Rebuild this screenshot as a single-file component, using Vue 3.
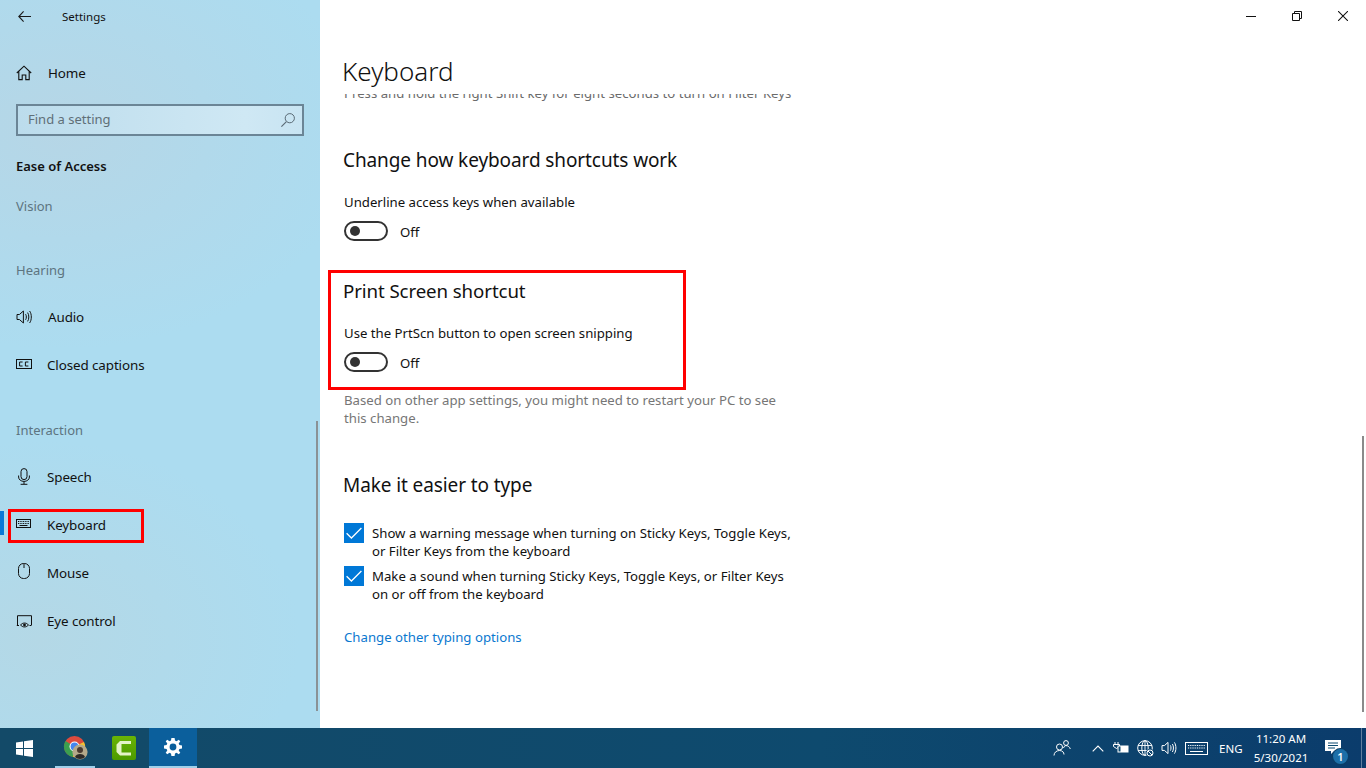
<script setup>
</script>

<template>
  <div class="screen">
    <div class="window">
      <aside class="side">
        <div class="titlebar">
          <svg class="back" width="13" height="11" viewBox="0 0 13 11"><path d="M5.6.4.8 5.5 5.6 10.6M.8 5.5H13" fill="none" stroke="#1a1a1a" stroke-width="1.1"/></svg>
          <span class="title">Settings</span>
        </div>
        <div class="nav-row home">
          <svg class="ico" width="16" height="16" viewBox="0 0 16 16"><path d="M.8 8 8 1.2 15.2 8M2.8 6.4V14.6H6.2V10H9.8V14.6H13.2V6.4" fill="none" stroke="#111" stroke-width="1.1"/></svg>
          <span class="nav-label lbl-home">Home</span>
        </div>
        <div class="search">
          <span class="search-text">Find a setting</span>
          <svg width="16" height="16" viewBox="0 0 16 16"><circle cx="9.8" cy="6.2" r="4.6" fill="none" stroke="#5a6a75" stroke-width="1"/><path d="M6.4 9.6 1.4 14.6" stroke="#5a6a75" stroke-width="1.1"/></svg>
        </div>
        <div class="cat">Ease of Access</div>
        <div class="group vision">Vision</div>
        <div class="group hearing">Hearing</div>
        <div class="nav-row audio">
          <svg class="ico" width="17" height="16" viewBox="0 0 17 16"><path d="M1 5.5H3.4L7.4 2V14L3.4 10.5H1ZM9.6 5.2C10.6 6.6 10.6 9.4 9.6 10.8M11.6 3.6C13.2 5.8 13.2 10.2 11.6 12.4M13.6 2C15.9 5 15.9 11 13.6 14" fill="none" stroke="#111" stroke-width="1"/></svg>
          <span class="nav-label lbl-home">Audio</span>
        </div>
        <div class="nav-row">
          <svg class="ico up1" width="16" height="10" viewBox="0 0 16 10"><rect x=".5" y=".5" width="15" height="9" fill="none" stroke="#111"/><path d="M6.6 3H3.6V7H6.6M12.4 3H9.4V7H12.4" fill="none" stroke="#111"/></svg>
          <span class="nav-label">Closed captions</span>
        </div>
        <div class="group interaction">Interaction</div>
        <div class="nav-row">
          <svg class="ico up1" width="16" height="17" viewBox="0 0 16 17"><rect x="5" y=".6" width="6" height="11" rx="3" fill="none" stroke="#111"/><path d="M2.6 7.5V9C2.6 11.6 5 13.4 8 13.4S13.4 11.6 13.4 9V7.5M8 13.4V16M4.6 16.3H11.4" fill="none" stroke="#111"/></svg>
          <span class="nav-label">Speech</span>
        </div>
        <div class="nav-row active">
          <span class="accent"></span>
          <span class="mark"></span>
          <svg class="ico up3" width="15" height="9" viewBox="0 0 15 9"><rect x=".5" y=".5" width="14" height="8" fill="none" stroke="#111"/><path d="M2 2.5H13M2 4.5H13" stroke="#111" stroke-dasharray="1 .7"/><path d="M3.5 6.5H11.5" stroke="#111"/></svg>
          <span class="nav-label">Keyboard</span>
        </div>
        <div class="nav-row">
          <svg class="ico up3" width="16" height="16" viewBox="0 0 16 16"><rect x="2.5" y=".5" width="11" height="15" rx="5" fill="none" stroke="#111"/><path d="M8 .5V5" stroke="#111"/></svg>
          <span class="nav-label">Mouse</span>
        </div>
        <div class="nav-row">
          <svg class="ico" width="16" height="13" viewBox="0 0 16 13"><path d="M1.5 10V.7H15.5V10" fill="none" stroke="#111"/><path d="M.8 10.5H3M13.5 10.5H15.5" stroke="#111"/><path d="M4.5 10C6.5 7.4 10.5 7.4 12.5 10 10.5 12.6 6.5 12.6 4.5 10Z" fill="none" stroke="#111"/><circle cx="8.5" cy="10" r="1.4" fill="#111"/></svg>
          <span class="nav-label">Eye control</span>
        </div>
        <div class="side-thumb"></div>
      </aside>

      <main class="main">
        <div class="win-controls">
          <svg width="10" height="10" viewBox="0 0 10 10"><path d="M0 5.5H10" stroke="#111"/></svg>
          <svg width="10" height="10" viewBox="0 0 10 10"><path d="M.5 2.5H7.5V9.5H.5ZM2.5 2.5V.5H9.5V7.5H7.5" fill="none" stroke="#111"/></svg>
          <svg width="10" height="10" viewBox="0 0 10 10"><path d="M0 0 10 10M10 0 0 10" stroke="#111" stroke-width="1.05"/></svg>
        </div>
        <h1 class="page-title">Keyboard</h1>
        <div class="scroller">
          <div class="clipped">Press and hold the right Shift key for eight seconds to turn on Filter Keys</div>
          <h2 class="head first">Change how keyboard shortcuts work</h2>
          <div class="setting">Underline access keys when available</div>
          <div class="toggle-row"><span class="toggle"><span class="knob"></span></span><span class="off">Off</span></div>

          <div class="boxed">
            <h2 class="head boxed-head">Print Screen shortcut</h2>
            <div class="setting boxed-setting">Use the PrtScn button to open screen snipping</div>
            <div class="toggle-row boxed-toggle"><span class="toggle"><span class="knob"></span></span><span class="off">Off</span></div>
          </div>
          <p class="note">Based on other app settings, you might need to restart your PC to see this change.</p>

          <h2 class="head type-head">Make it easier to type</h2>
          <div class="check-row">
            <span class="check"><svg width="20" height="20" viewBox="0 0 20 20"><path d="M2.6 10.2 7.4 15 17.4 5" fill="none" stroke="#fff" stroke-width="1.3"/></svg></span>
            <span class="check-text">Show a warning message when turning on Sticky Keys, Toggle Keys, or Filter Keys from the keyboard</span>
          </div>
          <div class="check-row second">
            <span class="check"><svg width="20" height="20" viewBox="0 0 20 20"><path d="M2.6 10.2 7.4 15 17.4 5" fill="none" stroke="#fff" stroke-width="1.3"/></svg></span>
            <span class="check-text">Make a sound when turning Sticky Keys, Toggle Keys, or Filter Keys on or off from the keyboard</span>
          </div>
          <div class="link">Change other typing options</div>
        </div>
        <div class="main-thumb"></div>
      </main>
    </div>

    <footer class="taskbar">
      <div class="start">
        <svg width="17" height="17" viewBox="0 0 17 17"><path d="M0 2.4 7 1.4V8H0ZM8 1.3 17 0V8H8ZM0 9H7V15.6L0 14.6ZM8 9H17V17L8 15.7Z" fill="#fff"/></svg>
      </div>
      <div class="tb-app chrome">
        <svg width="26" height="26" viewBox="0 0 26 26">
          <circle cx="11.5" cy="11.5" r="10.5" fill="#dd4b3e"/>
          <path d="M11.5 11.5 2.5 6A10.5 10.5 0 0 0 10 22Z" fill="#3c9f4f"/>
          <path d="M11.5 11.5 21 7A10.5 10.5 0 0 1 10 22Z" fill="#f2c230"/>
          <circle cx="11.5" cy="11.5" r="5" fill="#fff"/><circle cx="11.5" cy="11.5" r="3.9" fill="#4586ef"/>
          <circle cx="17" cy="17" r="7.6" fill="#b4a98a"/><circle cx="17" cy="15" r="3" fill="#4a3a30"/><path d="M12 22C13 18 21 18 22 22 20 24.5 14 24.5 12 22Z" fill="#2e2a28"/>
        </svg>
      </div>
      <div class="tb-app camtasia">
        <span class="cam-tile"><svg width="24" height="24" viewBox="0 0 24 24"><path d="M19 5H8L4.500 8.500V16L8 19.500H19V16.500H9.500V8H19Z" fill="#e4f3c8"/></svg></span>
      </div>
      <div class="tb-app settings-app">
        <svg width="18" height="18" viewBox="0 0 18 18"><path fill="#fff" fill-rule="evenodd" d="M7.4 0H10.6L11 2.6 12.6 3.3 14.7 1.7 16.3 3.3 14.7 5.4 15.4 7 18 7.4V10.6L15.4 11 14.7 12.6 16.3 14.7 14.7 16.3 12.6 14.7 11 15.4 10.6 18H7.4L7 15.4 5.4 14.7 3.3 16.3 1.7 14.7 3.3 12.6 2.6 11 0 10.6V7.4L2.6 7 3.3 5.4 1.7 3.3 3.3 1.7 5.4 3.3 7 2.6ZM9 5.6A3.4 3.4 0 1 0 9 12.4 3.4 3.4 0 1 0 9 5.6Z"/></svg>
      </div>
      <div class="tray">
        <svg class="t-people" width="18" height="16" viewBox="0 0 18 16"><circle cx="6.500" cy="7" r="3" fill="none" stroke="#fff"/><path d="M1 15.500C1 12.500 3.500 10.500 6.500 10.500S11 12.500 11 14.500" fill="none" stroke="#fff"/><circle cx="13" cy="3" r="2.400" fill="none" stroke="#fff"/><path d="M10.500 8C11 6.500 12 5.600 13 5.600 15 5.600 16.800 7 17.300 9" fill="none" stroke="#fff"/></svg>
        <svg class="t-chev" width="12" height="7" viewBox="0 0 12 7"><path d="M.7 6.3 6 1 11.3 6.3" fill="none" stroke="#fff" stroke-width="1.1"/></svg>
        <svg class="t-batt" width="16" height="12" viewBox="0 0 16 12"><path d="M2 0V2M5 0V2M.5 2.500H6.500V4.500L3.500 6.500.5 4.500Z" fill="none" stroke="#fff"/><rect x="4.500" y="3.500" width="11" height="7" fill="#fff"/><rect x="5.500" y="4.500" width="2" height="5" fill="#0c4a70"/></svg>
        <svg class="t-globe" width="17" height="17" viewBox="0 0 17 17"><circle cx="8" cy="8" r="7.300" fill="none" stroke="#fff"/><ellipse cx="8" cy="8" rx="3.200" ry="7.300" fill="none" stroke="#fff"/><path d="M1 5.500H15M1 10.500H15M8 .7V15.300" stroke="#fff" stroke-width=".9"/><circle cx="13" cy="13" r="4" fill="#0d4470"/><circle cx="13" cy="13" r="3" fill="none" stroke="#fff"/><path d="M11 11 15 15" stroke="#fff"/></svg>
        <svg class="t-vol" width="17" height="14" viewBox="0 0 17 14"><path d="M1 4.600H3.400L7 1.400V12.600L3.400 9.400H1ZM9.400 4.400C10.200 5.800 10.200 8.200 9.400 9.600M11.400 3C12.800 5.200 12.800 8.800 11.400 11M13.400 1.400C15.400 4.400 15.400 9.600 13.400 12.600" fill="none" stroke="#fff"/></svg>
        <svg class="t-kbd" width="23" height="13" viewBox="0 0 23 13"><rect x=".5" y=".5" width="22" height="12" fill="none" stroke="#fff"/><path d="M3 3.500H20M3 6H20" stroke="#fff" stroke-dasharray="1 .8"/><path d="M5 9.500H18" stroke="#fff"/></svg>
        <span class="t-lang">ENG</span>
        <div class="t-clock"><span>11:20 AM</span><span>5/30/2021</span></div>
        <div class="t-notif">
          <svg width="16" height="14" viewBox="0 0 16 14"><path d="M0 0H16V11H9L6 14V11H0Z" fill="#fff"/><path d="M3 3H13M3 5.500H13M3 8H10" stroke="#0c4a70"/></svg>
          <span class="badge">1</span>
          <span class="desk-line"></span>
        </div>
      </div>
    </footer>
  </div>
</template>

<style>
html, body { margin: 0; padding: 0; overflow: hidden; }
</style>

<style scoped>
.screen {
  width: 1366px;
  height: 768px;
  display: flex;
  flex-direction: column;
  font-family: "Noto Sans", "Open Sans", sans-serif;
  color: #111;
  overflow: hidden;
}
.window { flex: 1; display: flex; min-height: 0; background: #fff; }

/* sidebar */
.side {
  width: 320px;
  flex: none;
  position: relative;
  box-sizing: border-box;
  background:
    radial-gradient(260px 200px at 40px 640px, #b4d8e6 0%, rgba(180,216,230,0) 100%),
    radial-gradient(300px 220px at 60px 130px, #b6d6e6 0%, rgba(182,214,230,0) 100%),
    #acdcf0;
}
.titlebar { height: 32px; display: flex; align-items: center; }
.back { margin-left: 18px; }
.title { margin-left: 31px; font-size: 11.5px; color: #111; }
.nav-row {
  height: 48px;
  display: flex;
  align-items: center;
  padding-left: 16px;
  position: relative;
  font-size: 13.4px;
}
.ico { flex: none; }
.up1 { margin-top: -2px; }
.up3 { margin-top: -4px; }
.nav-label { position: absolute; left: 47px; letter-spacing: -.1px; }
.home { margin-top: 17px; }
.lbl-home { left: 48px; }
.search {
  margin: 7px 16px 0;
  height: 32px;
  box-sizing: border-box;
  border: 2px solid #6b8596;
  background: linear-gradient(90deg, #bcdcec, #cfe8f4 80%, #c8e4f2);
  display: flex;
  align-items: center;
  justify-content: space-between;
  padding: 0 6px 0 10px;
}
.search-text { font-size: 13px; color: #5f6f78; margin-top: -2px; }
.cat { margin: 20px 0 0 16px; font-size: 13px; font-weight: 600; line-height: 20px; }
.group { margin-left: 16px; font-size: 13px; line-height: 20px; color: #5d7480; }
.vision { margin-top: 20px; }
.hearing { margin-top: 44px; }
.audio { margin-top: 13px; }
.interaction { margin-top: 31px; margin-bottom: 13px; }
.accent { position: absolute; left: 0; top: 10px; width: 4px; height: 24px; background: #0a78d7; }
.mark { position: absolute; left: 8px; top: 8px; width: 136px; height: 34px; box-sizing: border-box; border: 3px solid #f00; }
.side-thumb { position: absolute; left: 316px; top: 421px; width: 2px; height: 290px; background: #8a9296; }

/* main */
.main { flex: 1; position: relative; min-width: 0; display: flex; flex-direction: column; }
.win-controls {
  position: absolute;
  top: 11px;
  right: 18px;
  display: flex;
  gap: 36px;
  align-items: center;
}
.page-title { margin: 52px 0 0 22px; height: 42px; font-size: 26px; font-weight: 300; line-height: 38px; color: #111; flex: none; }
.scroller { flex: 1; overflow: hidden; padding-left: 24px; min-height: 0; }
.clipped { margin-top: -8px; height: 14px; line-height: 14px; font-size: 13.2px; color: #6b6b6b; white-space: nowrap; }
.head { margin: 0; font-size: 19px; font-weight: 400; line-height: 26px; color: #111; letter-spacing: -.1px; }
.head.first { margin-left: -1px; margin-top: 47px; }
.setting { margin-top: 19px; font-size: 13.2px; line-height: 20px; }
.toggle-row { display: flex; align-items: center; margin-top: 9px; height: 20px; }
.toggle {
  width: 44px; height: 20px; box-sizing: border-box; border: 2px solid #333; border-radius: 10px;
  display: flex; align-items: center; padding-left: 4px; flex: none;
}
.knob { width: 10px; height: 10px; border-radius: 50%; background: #333; }
.off { margin-left: 12px; font-size: 13.2px; margin-top: 1px; }
.boxed {
  margin: 29px 0 0 -16px;
  width: 358px;
  height: 120px;
  box-sizing: border-box;
  border: 3px solid #f00;
  padding: 5px 0 0 12px;
}
.boxed-head { font-size: 18.700px; }
.boxed-setting { margin: 19px 0 0 1px; }
.boxed-toggle { margin: 9px 0 0 1px; }
.note { margin: 1px 0 0; width: 450px; font-size: 13.2px; line-height: 18px; color: #767676; }
.type-head { margin-top: 45px; margin-left: -1px; }
.check-row { display: flex; margin-top: 26px; width: 450px; }
.check-row.second { margin-top: 7px; }
.check { width: 20px; height: 20px; background: #0078d7; flex: none; margin-top: -1px; }
.check svg { display: block; }
.check-text { margin-left: 8px; font-size: 13.2px; line-height: 18px; }
.link { margin-top: 24px; font-size: 13.2px; line-height: 20px; color: #0a78cf; }
.main-thumb { position: absolute; right: 2px; top: 436px; width: 2px; height: 276px; background: #8a8a8a; }

/* taskbar */
.taskbar {
  height: 40px;
  flex: none;
  display: flex;
  align-items: stretch;
  background: linear-gradient(90deg, #134a68 0%, #0e4a6e 60%, #0b3c6c 100%);
  color: #fff;
}
.start { width: 48px; display: flex; align-items: center; justify-content: center; }
.tb-app { width: 48px; box-sizing: border-box; display: flex; align-items: center; justify-content: center; }
.chrome { margin-left: 7px; border-bottom: 2px solid #9fd0ea; width: 40px; padding-top: 2px; padding-left: 1px; }
.camtasia { margin-left: 5px; }
.cam-tile { width: 24px; height: 24px; border-radius: 2px; background: linear-gradient(#6ab404, #4c9a00); display: block; }
.cam-tile svg { display: block; }
.settings-app { background: #0b5f9c; border-bottom: 2px solid #9fd0ea; margin-left: 1px; }
.tray { margin-left: auto; display: flex; align-items: center; }
.tray > svg, .t-lang, .t-clock, .t-notif { flex: none; }
.t-people { margin-right: 21px; }
.t-chev { margin-right: 9px; }
.t-batt { margin-right: 8px; }
.t-globe { margin-right: 7px; }
.t-vol { margin-right: 7px; }
.t-kbd { margin-right: 11px; }
.t-lang { font-size: 11.500px; margin-right: 14px; width: 23px; white-space: nowrap; }
.t-clock { display: flex; flex-direction: column; align-items: center; font-size: 11.500px; line-height: 19px; width: 50px; margin-right: 19px; white-space: nowrap; }
.t-notif { position: relative; width: 41px; height: 40px; display: flex; align-items: center; box-sizing: border-box; }
.t-notif svg { margin-top: -3px; }
.badge {
  position: absolute; left: 8px; top: 21px; width: 15px; height: 15px; border-radius: 50%;
  background: #1d6fa8; box-shadow: 0 0 0 1px #0c3f66; font-size: 11px; font-weight: 600; line-height: 15px; text-align: center;
}
.desk-line { position: absolute; right: 4px; top: 0; width: 1px; height: 40px; background: rgba(255,255,255,.35); }
</style>
